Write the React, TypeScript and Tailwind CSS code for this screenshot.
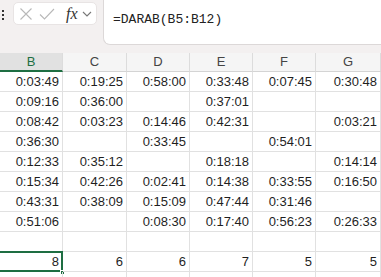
import React from 'react';

const COLS = ['B', 'C', 'D', 'E', 'F', 'G'];
const WIDTHS = ['w-[63px]', 'w-[64px]', 'w-[63px]', 'w-[63px]', 'w-[63px]', 'w-[65px]'];

const ROWS: string[][] = [
  ['0:03:49', '0:19:25', '0:58:00', '0:33:48', '0:07:45', '0:30:48'],
  ['0:09:16', '0:36:00', '', '0:37:01', '', ''],
  ['0:08:42', '0:03:23', '0:14:46', '0:42:31', '', '0:03:21'],
  ['0:36:30', '', '0:33:45', '', '0:54:01', ''],
  ['0:12:33', '0:35:12', '', '0:18:18', '', '0:14:14'],
  ['0:15:34', '0:42:26', '0:02:41', '0:14:38', '0:33:55', '0:16:50'],
  ['0:43:31', '0:38:09', '0:15:09', '0:47:44', '0:31:46', ''],
  ['0:51:06', '', '0:08:30', '0:17:40', '0:56:23', '0:26:33'],
  ['', '', '', '', '', ''],
  ['8', '6', '6', '7', '5', '5'],
  ['', '', '', '', '', ''],
];

const FormulaBar = () => (
  <div className="flex h-[53px] bg-[#f3f0f0]">
    <div className="w-[13px] flex flex-col items-center gap-[2px] pt-[10px] pr-[8px]">
      <span className="w-[2px] h-[2px] bg-[#333]" />
      <span className="w-[2px] h-[2px] bg-[#333]" />
      <span className="w-[2px] h-[2px] bg-[#333]" />
    </div>
    <div className="mt-[2px] w-[84px] h-[23px] bg-white rounded-[5px] border border-[#e8e4e4] flex items-center">
      <svg width="14" height="14" viewBox="0 0 14 14" className="ml-[5px]">
        <path d="M1.5 1.5 L12.5 12.5 M12.5 1.5 L1.5 12.5" stroke="#b8b8b8" strokeWidth="1.1" fill="none" />
      </svg>
      <svg width="16" height="14" viewBox="0 0 16 14" className="ml-[6px]">
        <path d="M1 7.5 L5.5 12 L15 2" stroke="#b8b8b8" strokeWidth="1.1" fill="none" />
      </svg>
      <span className="ml-[11px] text-[16px] leading-none italic text-[#333] font-['Liberation_Serif',serif]">fx</span>
      <svg width="10" height="8" viewBox="0 0 10 8" className="ml-[4px]">
        <path d="M1 2 L5 6 L9 2" stroke="#777" strokeWidth="1.1" fill="none" />
      </svg>
    </div>
    <div className="ml-[6px] flex-1 h-[46px] -mt-px bg-white border border-[#dcd8d8] border-r-0 rounded-bl-[7px] pl-[9px] pt-[6px]">
      <span className="text-[13px] leading-[16px] text-[#222] font-['Liberation_Mono',monospace]">=DARAB(B5:B12)</span>
    </div>
  </div>
);

export default function App() {
  return (
    <div className="w-[381px] h-[277px] overflow-hidden bg-white font-['Liberation_Sans',Arial,sans-serif]">
      <FormulaBar />
      <div className="flex h-[19px] bg-[#f5f5f5]">
        {COLS.map((c, i) => (
          <div
            key={c}
            className={`${WIDTHS[i]} shrink-0 flex items-center justify-center text-[13px] border-r border-[#dcdcdc] ${
              i === 0 ? 'bg-[#e1e1e1] text-[#1e6e42] border-b-2 border-b-[#1e6e42]' : 'text-[#444] border-b border-b-[#d4d4d4]'
            }`}
          >
            {c}
          </div>
        ))}
      </div>
      {ROWS.map((row, r) => (
        <div key={r} className="flex h-[20px]">
          {row.map((v, i) => {
            const selected = r === 9 && i === 0;
            return (
              <div
                key={i}
                className={`${WIDTHS[i]} shrink-0 relative flex items-center justify-end pr-[3px] text-[13px] text-[#1f1f1f] border-r border-b border-[#e1e1e1]`}
              >
                {v}
                {selected && (
                  <>
                    <div className="absolute -left-[2px] -top-[1px] right-[-1px] bottom-[-1px] border-2 border-[#1e6e42]" />
                    <div className="absolute right-[-3px] bottom-[-4px] w-[5px] h-[5px] bg-[#1e6e42] border border-white" />
                  </>
                )}
              </div>
            );
          })}
        </div>
      ))}
    </div>
  );
}
